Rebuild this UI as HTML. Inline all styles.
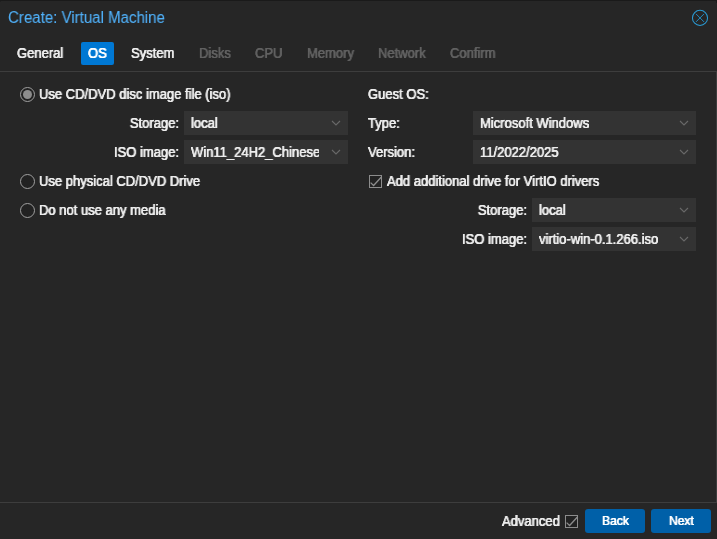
<!DOCTYPE html>
<html><head><meta charset="utf-8">
<style>
html,body{margin:0;padding:0;}
body{width:717px;height:539px;background:#262626;overflow:hidden;position:relative;font-family:"Liberation Sans",sans-serif;font-size:14px;color:#ededed;}
.t,.fld span,.btn span{will-change:transform;}
.abs{position:absolute;white-space:nowrap;}
.t{margin-top:.3px;position:absolute;white-space:nowrap;line-height:16px;height:16px;transform:scaleX(.929);transform-origin:0 50%;-webkit-text-stroke:0.22px;text-shadow:0.33px 0 0 currentColor,-0.33px 0 0 currentColor;}
.top{left:0;top:0;width:717px;height:1px;background:#1a1a1a;}
.title{left:8px;top:9.0px;font-size:16px;transform:scaleX(.94);-webkit-text-stroke:0.1px;text-shadow:none;line-height:18px;color:#50b0f8;}
.tab{top:45px;color:#ededed;}
.tab.dis{color:#626262;}
.tabact{left:81px;top:42px;width:33px;height:23px;background:#0078d4;border-radius:2px;}
.panel{left:-1px;top:71px;width:716px;height:430px;border:1px solid #3d3d3d;}
.fld{position:absolute;height:24px;background:#333;}
.fld span{position:absolute;left:7px;top:4.3px;line-height:16px;white-space:nowrap;color:#ededed;overflow:hidden;transform:scaleX(.929);transform-origin:0 50%;-webkit-text-stroke:0.22px;text-shadow:0.33px 0 0 currentColor,-0.33px 0 0 currentColor;}
.fld svg{position:absolute;right:7px;top:8.7px;}
.lbl{text-align:right;transform-origin:100% 50%;}
.radio{position:absolute;width:13px;height:13px;border:1px solid #a0a0a0;border-radius:50%;background:#222;}
.radio.on::after{content:"";position:absolute;left:2px;top:2px;width:9px;height:9px;border-radius:50%;background:#8c8c8c;}
.cb{position:absolute;width:11px;height:11px;border:1px solid #8c8c8c;background:#222;}
.btn{position:absolute;top:509px;width:60px;height:24px;background:#0060a8;border-radius:3px;color:#fff;text-align:center;line-height:24px;}
.btn span{display:inline-block;font-size:13px;position:relative;top:-1px;left:0.5px;transform:scaleX(.928);-webkit-text-stroke:0.22px;text-shadow:0.33px 0 0 currentColor,-0.33px 0 0 currentColor;}
</style></head><body>
<div class="abs top"></div>
<div class="abs" style="left:716px;top:1px;width:1px;height:2px;background:#1b1b1b"></div>
<div class="abs" style="left:0;top:1px;width:1px;height:1px;background:#1f1f1f"></div>
<div class="t title">Create: Virtual Machine</div>
<svg class="abs" style="left:691px;top:9px" width="18" height="18" viewBox="0 0 18 18"><circle cx="9" cy="8.9" r="7.55" fill="none" stroke="#2a9bd4" stroke-width="1.05"/><path d="M5 4.9L13 12.9M13 4.9L5 12.9" stroke="#2390c8" stroke-width="0.95" fill="none"/></svg>

<div class="abs tabact"></div>
<div class="t tab" style="left:17px">General</div>
<div class="t tab" style="left:88px;color:#fff">OS</div>
<div class="t tab" style="left:131px">System</div>
<div class="t tab dis" style="left:199px">Disks</div>
<div class="t tab dis" style="left:255px">CPU</div>
<div class="t tab dis" style="left:307px">Memory</div>
<div class="t tab dis" style="left:378px">Network</div>
<div class="t tab dis" style="left:450px">Confirm</div>

<div class="abs panel"></div>

<div class="radio on" style="left:20px;top:87px"></div>
<div class="t" style="left:39px;top:86px">Use CD/DVD disc image file (iso)</div>
<div class="t lbl" style="left:79px;width:100px;top:115px">Storage:</div>
<div class="fld" style="left:184px;top:111px;width:164px"><span>local</span><svg width="10" height="7" viewBox="0 0 10 7"><path d="M1 1L5 5L9 1" stroke="#696969" stroke-width="1.1" fill="none"/></svg></div>
<div class="t lbl" style="left:79px;width:100px;top:144px">ISO image:</div>
<div class="fld" style="left:184px;top:140px;width:164px"><span style="width:137.8px">Win11_24H2_Chinese_Simplified_x64.iso</span><svg width="10" height="7" viewBox="0 0 10 7"><path d="M1 1L5 5L9 1" stroke="#696969" stroke-width="1.1" fill="none"/></svg></div>
<div class="radio" style="left:20px;top:174px"></div>
<div class="t" style="left:39px;top:173px">Use physical CD/DVD Drive</div>
<div class="radio" style="left:20px;top:203px"></div>
<div class="t" style="left:39px;top:202px">Do not use any media</div>

<div class="t" style="left:368px;top:86px">Guest OS:</div>
<div class="t" style="left:368px;top:115px">Type:</div>
<div class="fld" style="left:473px;top:111px;width:223px"><span>Microsoft Windows</span><svg width="10" height="7" viewBox="0 0 10 7"><path d="M1 1L5 5L9 1" stroke="#696969" stroke-width="1.1" fill="none"/></svg></div>
<div class="t" style="left:368px;top:144px">Version:</div>
<div class="fld" style="left:473px;top:140px;width:223px"><span>11/2022/2025</span><svg width="10" height="7" viewBox="0 0 10 7"><path d="M1 1L5 5L9 1" stroke="#696969" stroke-width="1.1" fill="none"/></svg></div>
<div class="cb" style="left:369px;top:175px"><svg style="position:absolute;left:-1px;top:-1px" width="13" height="13" viewBox="0 0 13 13"><path d="M1.6 7.6L4.6 10.5L12.4 2" stroke="#8c8c8c" stroke-width="1.3" fill="none"/></svg></div>
<div class="t" style="left:387px;top:173px">Add additional drive for VirtIO drivers</div>
<div class="t lbl" style="left:427px;width:100px;top:202px">Storage:</div>
<div class="fld" style="left:532px;top:198px;width:164px"><span>local</span><svg width="10" height="7" viewBox="0 0 10 7"><path d="M1 1L5 5L9 1" stroke="#696969" stroke-width="1.1" fill="none"/></svg></div>
<div class="t lbl" style="left:427px;width:100px;top:231px">ISO image:</div>
<div class="fld" style="left:532px;top:227px;width:164px"><span>virtio-win-0.1.266.iso</span><svg width="10" height="7" viewBox="0 0 10 7"><path d="M1 1L5 5L9 1" stroke="#696969" stroke-width="1.1" fill="none"/></svg></div>

<div class="t" style="left:502px;top:513px">Advanced</div>
<div class="cb" style="left:565px;top:515px"><svg style="position:absolute;left:-1px;top:-1px" width="13" height="13" viewBox="0 0 13 13"><path d="M1.6 7.6L4.6 10.5L12.4 2" stroke="#8c8c8c" stroke-width="1.3" fill="none"/></svg></div>
<div class="btn" style="left:585px"><span>Back</span></div>
<div class="btn" style="left:651px"><span>Next</span></div>
</body></html>
